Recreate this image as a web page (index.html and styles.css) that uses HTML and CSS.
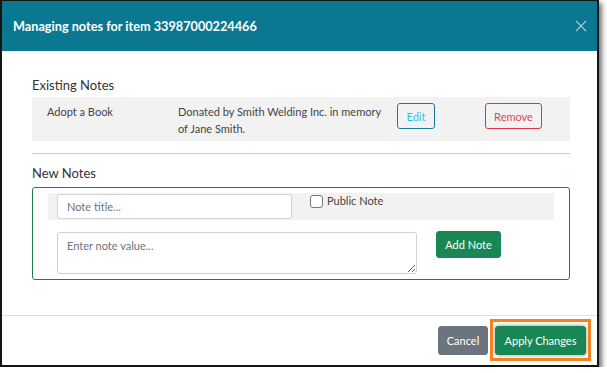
FILE: index.html
```html
<!DOCTYPE html>
<html lang="en">
<head>
    <meta charset="UTF-8">
    <title>Managing notes</title>
    <link rel="stylesheet" href="styles.css">
</head>
<body>
    <div class="modal">
        <div class="modal-header">
            <div class="modal-title">Managing notes for item 33987000224466</div>
            <svg class="close" width="12" height="12" viewBox="0 0 12 12">
                <path d="M1 1 L11 11 M11 1 L1 11" stroke="#a8ccd6" stroke-width="1.1" fill="none"/>
            </svg>
        </div>

        <div class="modal-body">
            <div class="section-title">Existing Notes</div>
            <div class="note-row">
                <div class="note-label">Adopt a Book</div>
                <div class="note-value"><span>Donated by Smith Welding Inc. in memory of Jane Smith.</span></div>
                <div class="note-edit"><button class="btn btn-outline-info">Edit</button></div>
                <div><button class="btn btn-outline-danger">Remove</button></div>
            </div>

            <hr class="divider">

            <div class="section-title">New Notes</div>
            <div class="new-box">
                <div class="new-row">
                    <input class="form-input" type="text" placeholder="Note title...">
                    <label class="check"><span class="check-box"></span>Public Note</label>
                </div>
                <div class="value-row">
                    <textarea class="form-text" placeholder="Enter note value..."></textarea>
                    <button class="btn btn-success add-btn">Add Note</button>
                </div>
            </div>
        </div>

        <div class="modal-footer">
            <button class="btn btn-secondary">Cancel</button>
            <span class="highlight"><button class="btn btn-success apply">Apply Changes</button></span>
        </div>
    </div>
</body>
</html>
```

FILE: styles.css
```css
body {
    margin: 0;
    background-color: #ffffff;
    font-family: 'Lato', 'Open Sans', sans-serif;
    color: #333;
}

.modal {
    width: 599px;
    height: 367px;
    box-sizing: border-box;
    border: 2px solid #151515;
    border-top-width: 1px;
    box-shadow: 3px 3px 5px rgba(0, 0, 0, 0.55);
    display: flex;
    flex-direction: column;
    background-color: #ffffff;
}

.modal-header {
    height: 50px;
    background-color: #0b7891;
    display: flex;
    align-items: center;
    justify-content: space-between;
    padding: 0 10px 0 11px;
}

.modal-title {
    color: #ffffff;
    font-size: 12.7px;
    font-weight: bold;
}

.modal-body {
    flex: 1;
    padding: 25px 27px 0 30px;
}

.section-title {
    font-size: 13px;
    line-height: 18px;
    color: #333;
}

.note-row {
    margin-top: 3px;
    background-color: #f2f2f2;
    display: flex;
    align-items: flex-start;
    padding: 6px 0 4px 15px;
    font-size: 11px;
    line-height: 17px;
    color: #444;
}

.note-label {
    width: 131px;
}

.note-value {
    width: 219px;
}

.note-value span {
    display: block;
    width: 205px;
}

.note-edit {
    width: 88px;
}

.btn {
    font-family: inherit;
    font-size: 11px;
    border-radius: 3px;
    border: 1px solid transparent;
    background: none;
    height: 26px;
    padding: 0 8px;
    cursor: pointer;
}

.btn-outline-info {
    border-color: #137f91;
    color: #1ec8e6;
    width: 38px;
}

.btn-outline-danger {
    border-color: #dc3545;
    color: #e04657;
    width: 57px;
}

.btn-success {
    background-color: #198754;
    border-color: #198754;
    color: #ffffff;
}

.btn-secondary {
    background-color: #6c757d;
    border-color: #6c757d;
    color: #ffffff;
}

.divider {
    border: 0;
    border-top: 1px solid #cccccc;
    margin: 12px 0 10px;
}

.new-box {
    margin-top: 5px;
    border: 1px solid #1e7e4a;
    border-radius: 3px;
    padding: 5px 15px 5px 15px;
}

.new-row {
    background-color: #f2f2f2;
    height: 27px;
    box-sizing: border-box;
    padding: 1px 0 0 9px;
    display: flex;
    align-items: flex-start;
}

.form-input {
    width: 235px;
    height: 25px;
    box-sizing: border-box;
    border: 1px solid #ced4da;
    border-radius: 3px;
    padding: 0 9px;
    font-family: inherit;
    font-size: 11px;
}

.form-input::placeholder,
.form-text::placeholder {
    color: #6c757d;
}

.check {
    margin-left: 18px;
    display: flex;
    align-items: center;
    font-size: 11px;
    color: #444;
    line-height: 14px;
}

.check-box {
    width: 11px;
    height: 11px;
    border: 1px solid #777;
    border-radius: 3px;
    background: #fff;
    margin-right: 4px;
}

.value-row {
    margin-top: 11px;
    padding-left: 9px;
    display: flex;
    align-items: flex-start;
}

.form-text {
    width: 360px;
    height: 42px;
    box-sizing: border-box;
    border: 1px solid #ced4da;
    border-radius: 3px;
    padding: 6px 9px;
    font-family: inherit;
    font-size: 11px;
    margin: 1px 0 0;
}

.add-btn {
    margin-left: 19px;
    width: 65px;
    height: 27px;
    padding: 0;
}

.modal-footer {
    border-top: 1px solid #dee2e6;
    padding: 10px 11px 10px;
    display: flex;
    justify-content: flex-end;
    gap: 7px;
}

.modal-footer .btn {
    height: 29px;
}

.btn-secondary {
    width: 50px;
    padding: 0;
}

.apply {
    width: 91px;
    padding: 0;
    box-shadow: 0 0 4px rgba(0, 0, 0, 0.45);
}

.highlight {
    position: relative;
    display: inline-block;
    height: 29px;
}

.highlight::after {
    content: "";
    position: absolute;
    top: -7px;
    left: -5px;
    right: -5px;
    bottom: -6px;
    border: 3px solid #f5821f;
}
```
